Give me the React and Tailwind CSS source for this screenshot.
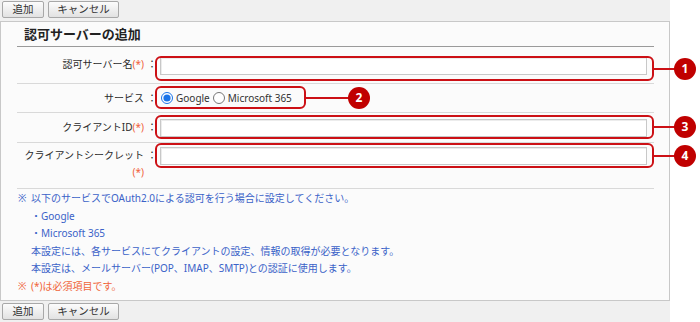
import React from "react";

const Btn = ({ children, w }) => (
  <button
    className={`h-[17px] ${w} rounded-[2px] border border-[#a8a8a8] bg-gradient-to-b from-[#fcfcfc] to-[#e2e2e2] text-[10.5px] leading-[15px] text-[#333]`}
  >
    {children}
  </button>
);

const Req = () => <span className="text-[#f0603a]">(*)</span>;

const Label = ({ children }) => (
  <div className="flex w-[143px] shrink-0 text-[#2a2a2a]">
    <div className="w-[127px] text-right">{children}</div>
    <div className="w-[16px] text-center">：</div>
  </div>
);

const TextInput = () => (
  <input
    type="text"
    className="h-[18px] w-[487px] border border-[#c8c8c8] bg-white outline-none shadow-[inset_1px_1px_0_#ececec]"
  />
);

// red call-out frame + numbered badge
const Callout = ({ frame, line, badge, n }) => (
  <>
    <div className={`absolute rounded-[6px] border-2 border-[#cc1015] ${frame}`} />
    <div className={`absolute h-[2px] bg-[#cc1015] ${line}`} />
    <div
      className={`absolute flex h-[22px] w-[22px] items-center justify-center rounded-full bg-[#c00000] text-[12px] font-bold text-white ${badge}`}
    >
      {n}
    </div>
  </>
);

export default function App() {
  return (
    <div className="relative h-[322px] w-[700px] bg-white font-['Noto_Sans','Noto_Sans_CJK_JP',sans-serif] text-[10px]">
      <div className="flex h-full w-[670px] flex-col bg-[#f0f0f0]">
        <div className="flex h-[21px] gap-[4px] pl-[2px] pt-[1px]">
          <Btn w="w-[42px]">追加</Btn>
          <Btn w="w-[71px]">キャンセル</Btn>
        </div>

        <div className="h-[280px] border border-[#c8c8c8] bg-[#fbfbfb] pl-[16px] pr-[15px]">
          <div className="h-[25px] border-b border-[#9a9a9a] pl-[7px] text-[13px] font-bold leading-[24px] text-[#222]">
            認可サーバーの追加
          </div>

          <div className="flex h-[37px] border-b border-[#d9d9d9] pt-[10px]">
            <Label>
              認可サーバー名<Req />
            </Label>
            <TextInput />
          </div>

          <div className="flex h-[29px] items-center border-b border-[#d9d9d9]">
            <Label>サービス</Label>
            <label className="flex items-center gap-[1px] text-[#333]">
              <input type="radio" name="svc" defaultChecked className="m-0 ml-[1px] h-[12px] w-[12px] accent-[#1a73e8]" />
              <span className="ml-[2px]">Google</span>
            </label>
            <label className="ml-[3px] flex items-center text-[#333]">
              <input type="radio" name="svc" className="m-0 h-[12px] w-[12px]" />
              <span className="ml-[3px]">Microsoft 365</span>
            </label>
          </div>

          <div className="flex h-[30px] items-center border-b border-[#d9d9d9]">
            <Label>
              クライアントID<Req />
            </Label>
            <TextInput />
          </div>

          <div className="flex h-[46px] border-b border-[#d9d9d9] pt-[4px] leading-[17px]">
            <Label>
              クライアントシークレット <Req />
            </Label>
            <div>
              <TextInput />
            </div>
          </div>

          <div className="pt-[1px] leading-[17.5px] text-[#3a62c8]">
            <div className="flex">
              <span className="w-[14px] pl-[1px]">※</span>
              <span>以下のサービスでOAuth2.0による認可を行う場合に設定してください。</span>
            </div>
            <div className="pl-[14px]">・Google</div>
            <div className="pl-[14px]">・Microsoft 365</div>
            <div className="pl-[14px]">本設定には、各サービスにてクライアントの設定、情報の取得が必要となります。</div>
            <div className="pl-[14px]">本設定は、メールサーバー(POP、IMAP、SMTP)との認証に使用します。</div>
            <div className="flex text-[#f0653a]">
              <span className="w-[14px] pl-[1px]">※</span>
              <span>(*)は必須項目です。</span>
            </div>
          </div>
        </div>

        <div className="flex gap-[4px] pl-[2px] pt-[2px]">
          <Btn w="w-[42px]">追加</Btn>
          <Btn w="w-[71px]">キャンセル</Btn>
        </div>
      </div>

      <Callout frame="left-[155px] top-[56px] h-[25px] w-[499px]" line="left-[653px] top-[68px] w-[22px]" badge="left-[674px] top-[58px]" n="1" />
      <Callout frame="left-[155px] top-[86px] h-[23px] w-[151px]" line="left-[305px] top-[97px] w-[44px]" badge="left-[348px] top-[87px]" n="2" />
      <Callout frame="left-[155px] top-[115px] h-[24px] w-[499px]" line="left-[653px] top-[126px] w-[22px]" badge="left-[674px] top-[116px]" n="3" />
      <Callout frame="left-[155px] top-[143px] h-[25px] w-[499px]" line="left-[653px] top-[155px] w-[22px]" badge="left-[674px] top-[145px]" n="4" />
    </div>
  );
}
